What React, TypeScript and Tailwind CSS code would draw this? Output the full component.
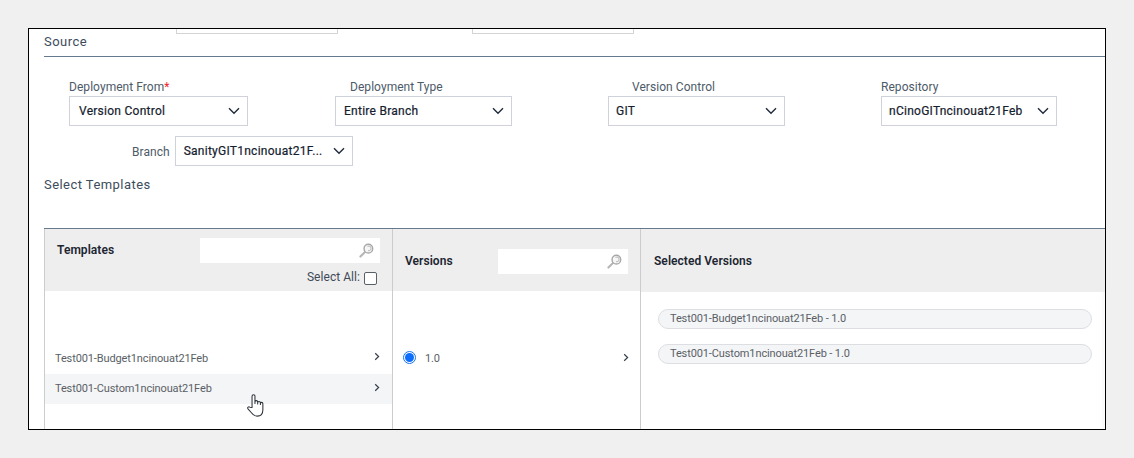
import React from "react";

const font = { fontFamily: "Roboto, 'Liberation Sans', sans-serif" };

function Chevron() {
  return (
    <svg width="12" height="8" viewBox="0 0 12 8" className="shrink-0">
      <path d="M1 1.2 L6 6.2 L11 1.2" fill="none" stroke="#1f2a3c" strokeWidth="1.4" />
    </svg>
  );
}

function Caret() {
  return (
    <svg width="6" height="9" viewBox="0 0 6 9" className="shrink-0">
      <path d="M1.2 1.2 L4.6 4.5 L1.2 7.8" fill="none" stroke="#333f4d" strokeWidth="1.2" />
    </svg>
  );
}

function Lens() {
  return (
    <svg width="15" height="15" viewBox="0 0 16 16" className="shrink-0">
      <path d="M1.5 14.5 L6.8 9.2" stroke="#b5b5b5" strokeWidth="2.2" strokeLinecap="round" />
      <circle cx="10" cy="6" r="4.6" fill="#f7f7f7" stroke="#a8a8a8" strokeWidth="1.5" />
      <path d="M9 3.8 A2.4 2.4 0 1 1 9.6 8" fill="none" stroke="#c2c2c2" strokeWidth="1.2" />
    </svg>
  );
}

function Select({ value, className, pad = "pl-[9px]" }: { value: string; className: string; pad?: string }) {
  return (
    <div className={`h-[30px] flex items-center justify-between border border-[#cfd2da] bg-white pr-[7px] text-[12px] tracking-[0.26px] text-[#14202e] ${pad} ${className}`}>
      <span className="whitespace-nowrap pb-[1px] [-webkit-text-stroke:0.2px_#14202e]">{value}</span>
      <Chevron />
    </div>
  );
}

function Field({ label, value, w, labelPad, pad, req }: { label: string; value: string; w: string; labelPad: string; pad?: string; req?: boolean }) {
  return (
    <div className={`flex flex-col ${w}`}>
      <div className={`h-[16px] leading-[14px] text-[12px] tracking-[0.05px] text-[#4d5a68] whitespace-nowrap ${labelPad}`}>
        {label}
        {req && <span className="text-[#f0222f]">*</span>}
      </div>
      <Select value={value} className="w-full" pad={pad} />
    </div>
  );
}

function Row({ text, active }: { text: string; active?: boolean }) {
  return (
    <div className={`h-[30px] flex items-center justify-between pl-[10px] pr-[12px] text-[11px] tracking-[-0.12px] text-[#5a5f66] ${active ? "bg-[#f4f5f6]" : ""}`}>
      <span className={active ? "" : "pt-[2px]"}>{text}</span>
      <span className="-mt-[3px]"><Caret /></span>
    </div>
  );
}

function Pill({ text }: { text: string }) {
  return (
    <div className="h-[20px] flex items-center rounded-full border border-[#dcdee2] bg-[#f4f5f7] pl-[11px] text-[11px] tracking-[-0.12px] text-[#5a5f66]">
      {text}
    </div>
  );
}

export default function App() {
  return (
    <div className="w-[1134px] h-[458px] bg-[#f0f0f0] pt-[28px] pl-[28px]" style={font}>
      <div className="relative w-[1078px] h-[402px] border border-black bg-white overflow-hidden">
        <div className="flex h-[5px]">
          <div className="ml-[147px] w-[162px] border border-t-0 border-[#d4d4d4]" />
          <div className="ml-[134px] w-[162px] border border-t-0 border-[#d4d4d4]" />
        </div>

        <div className="ml-[15px] mt-[1px] h-[22px] border-b border-[#65798f] text-[13px] tracking-[0.45px] leading-[14px] text-[#3d4c5c]">
          Source
        </div>

        <div className="pl-[40px] pt-[23px] flex">
          <Field label="Deployment From" req value="Version Control" w="w-[179px]" labelPad="" />
          <Field label="Deployment Type" value="Entire Branch" w="w-[177px] ml-[87px]" labelPad="pl-[15px]" pad="pl-[8px]" />
          <Field label="Version Control" value="GIT" w="w-[177px] ml-[96px]" labelPad="pl-[24px]" pad="pl-[7px]" />
          <Field label="Repository" value="nCinoGITncinouat21Feb" w="w-[176px] ml-[96px]" labelPad="" pad="pl-[7px]" />
        </div>

        <div className="flex items-center mt-[10px] pl-[103px]">
          <span className="text-[12px] tracking-[0.05px] text-[#4d5a68] pt-[2px]">Branch</span>
          <Select value="SanityGIT1ncinouat21F..." className="w-[178px] ml-[5px]" pad="pl-[8px]" />
        </div>

        <div className="ml-[15px] mt-[11px] h-[16px] leading-[16px] text-[13px] tracking-[0.45px] text-[#3d4c5c]">
          Select Templates
        </div>

        <div className="ml-[15px] mt-[35px] border-t border-[#65798f] grid grid-cols-[349px_248px_1fr] h-[201px]">
          <div className="flex flex-col border-l border-r border-[#cccccc]">
            <div className="h-[62px] bg-[#eeeeee] pl-[12px] pr-[12px] pt-[9px]">
              <div className="flex items-center justify-between">
                <span className="text-[12px] font-semibold tracking-[0.05px] text-[#1c2530] -mt-[1px]">Templates</span>
                <div className="w-[180px] h-[25px] bg-white flex items-center justify-end pr-[6px]"><Lens /></div>
              </div>
              <div className="flex items-center justify-end gap-[4px] mt-[5px] pr-[3px]">
                <span className="text-[12px] tracking-[0.05px] text-[#3f4a57]">Select All:</span>
                <span className="w-[13px] h-[13px] rounded-[2px] border border-[#5a6068] bg-white mt-[2px]" />
              </div>
            </div>
            <div className="pt-[52px]">
              <Row text="Test001-Budget1ncinouat21Feb" />
              <div className="h-[1px]" />
              <Row text="Test001-Custom1ncinouat21Feb" active />
            </div>
          </div>

          <div className="flex flex-col border-r border-[#cccccc]">
            <div className="h-[62px] bg-[#eeeeee] flex items-center justify-between pl-[12px] pr-[12px] pt-[2px]">
              <span className="text-[12px] font-semibold tracking-[0.05px] text-[#1c2530]">Versions</span>
              <div className="w-[130px] h-[25px] bg-white flex items-center justify-end pr-[6px]"><Lens /></div>
            </div>
            <div className="pt-[52px]">
              <div className="h-[30px] flex items-center pl-[10px] pr-[11px]">
                <span className="w-[13px] h-[13px] rounded-full border-[1.5px] border-[#1a73e8] flex items-center justify-center -mt-[2px]">
                  <span className="w-[9px] h-[9px] rounded-full bg-[#0d6efd]" />
                </span>
                <span className="ml-[9px] pt-[2px] text-[11px] tracking-[-0.12px] text-[#5a5f66]">1.0</span>
                <span className="ml-auto -mt-[1px]"><Caret /></span>
              </div>
            </div>
          </div>

          <div className="flex flex-col">
            <div className="h-[63px] bg-[#eeeeee] flex items-center pl-[13px] pt-[1px] text-[12px] font-semibold tracking-[0.05px] text-[#1c2530]">
              Selected Versions
            </div>
            <div className="flex-1 border-r-[3px] border-[#fafafa]">
              <div className="flex flex-col gap-[15px] pt-[17px] pl-[17px] pr-[10px]">
                <Pill text="Test001-Budget1ncinouat21Feb - 1.0" />
                <Pill text="Test001-Custom1ncinouat21Feb - 1.0" />
              </div>
            </div>
          </div>
        </div>

        <svg width="20" height="25" viewBox="0 0 18 24" className="absolute left-[217px] top-[364px]">
          <path
            d="M5.2 14 V3 a1.4 1.4 0 0 1 2.8 0 V10 V8.6 a1.3 1.3 0 0 1 2.6 0 V10.5 V9.4 a1.3 1.3 0 0 1 2.6 0 V11 V10.2 a1.2 1.2 0 0 1 2.4 0 V16 c0 3.6 -2 6.2 -5.4 6.2 c-2.6 0 -4 -1 -5.4 -3 L1.3 15.2 c-.9 -1.4 .7 -2.6 1.8 -1.6 Z"
            fill="#fff"
            stroke="#2a3038"
            strokeWidth="1"
            strokeLinejoin="round"
          />
        </svg>
      </div>
    </div>
  );
}
